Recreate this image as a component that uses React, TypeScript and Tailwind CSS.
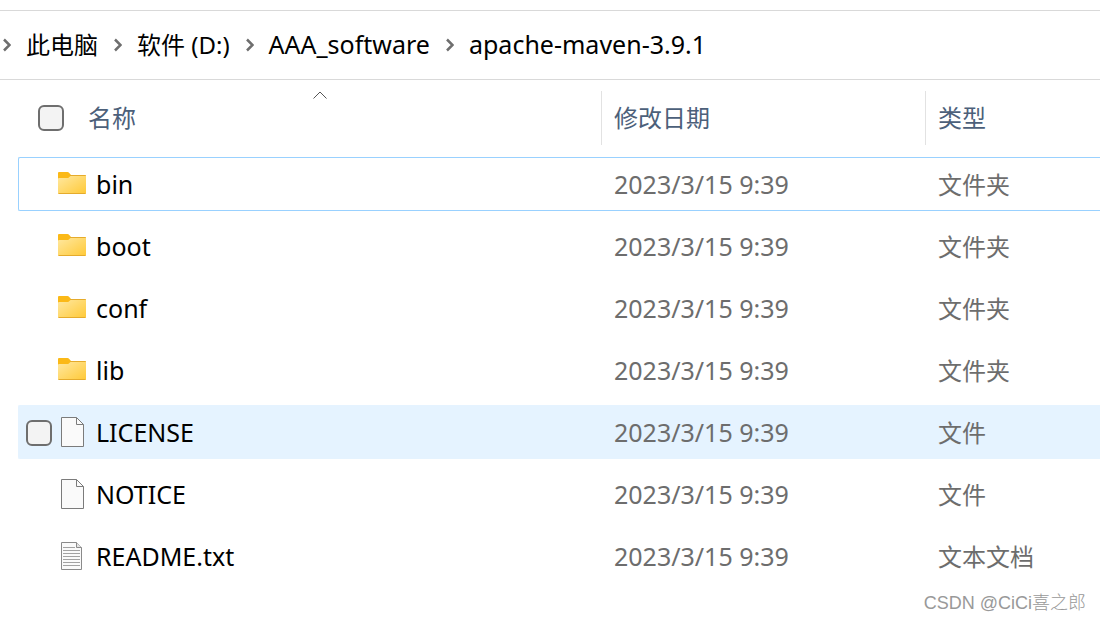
type EntryKind = "folder" | "file" | "text";

interface Entry {
  name: string;
  modified: string;
  type: string;
  kind: EntryKind;
  state?: "focused" | "hovered";
}

const PATH = [
  { label: "此电脑", size: "text-2xl" },
  { label: "软件 (D:)", size: "text-2xl" },
  { label: "AAA_software", size: "text-[25px]" },
  { label: "apache-maven-3.9.1", size: "text-[25px]" },
];

const ENTRIES: Entry[] = [
  { name: "bin", modified: "2023/3/15 9:39", type: "文件夹", kind: "folder", state: "focused" },
  { name: "boot", modified: "2023/3/15 9:39", type: "文件夹", kind: "folder" },
  { name: "conf", modified: "2023/3/15 9:39", type: "文件夹", kind: "folder" },
  { name: "lib", modified: "2023/3/15 9:39", type: "文件夹", kind: "folder" },
  { name: "LICENSE", modified: "2023/3/15 9:39", type: "文件", kind: "file", state: "hovered" },
  { name: "NOTICE", modified: "2023/3/15 9:39", type: "文件", kind: "file" },
  { name: "README.txt", modified: "2023/3/15 9:39", type: "文本文档", kind: "text" },
];

const CHECKBOX =
  "size-[26px] shrink-0 appearance-none rounded-md border-2 border-[#6e6e6e] bg-[#f3f3f3] checked:bg-[#0067c0]";

const FolderIcon = () => (
  <svg viewBox="0 0 32 32" className="size-8 shrink-0" aria-hidden="true">
    <defs>
      <linearGradient id="folder-front" x1="0" y1="0" x2="1" y2="1">
        <stop offset="0" stopColor="#ffe8a0" />
        <stop offset="1" stopColor="#ffc937" />
      </linearGradient>
    </defs>
    <path d="M2 5a1 1 0 0 1 1-1h8.500q.8 0 1.300.6L15 7h14a1 1 0 0 1 1 1v6H2z" fill="#fbb917" />
    <path d="M2 11a1 1 0 0 1 1-1h8.500q.8 0 1.300-.6L14.500 8H30v17a1 1 0 0 1-1 1H3a1 1 0 0 1-1-1z" fill="url(#folder-front)" />
    <path d="M14 7.500h15.500M2.500 25.500h27" stroke="#e5ab2c" fill="none" />
  </svg>
);

const FileIcon = () => (
  <svg viewBox="0 0 32 32" className="size-8 shrink-0" aria-hidden="true">
    <path d="M5.500 1.500h15l7 7v22h-22z" fill="#fafafa" stroke="#7b7b7b" />
    <path d="M20.500 1.500v7h7" fill="none" stroke="#7b7b7b" />
  </svg>
);

const TextIcon = () => (
  <svg viewBox="0 0 32 32" className="size-8 shrink-0" aria-hidden="true">
    <path d="M5.500 2.500h15l5 5v22h-20z" fill="#fafafa" stroke="#8a8a8a" />
    <path d="M20.500 2.500v5h5" fill="#e4e4e4" stroke="#8a8a8a" />
    <path
      d="M7 7.500h12M7 10.500h17M7 13.500h17M7 16.500h17M7 19.500h17M7 22.500h17M7 25.500h17"
      stroke="#a2a2a2"
    />
  </svg>
);

const ICONS = { folder: FolderIcon, file: FileIcon, text: TextIcon };

const Breadcrumb = () => (
  <nav aria-label="路径" className="border-y border-[#d9d9d9]">
    <ol className="flex h-[68px] items-center whitespace-nowrap pl-[3px] text-black">
      {PATH.map(({ label, size }) => (
        <li key={label} className="flex items-center">
          <svg viewBox="0 0 8 14" className="mr-[15px] h-[14px] w-2 shrink-0" aria-hidden="true">
            <path d="M1 1.500l5.500 5.500L1 12.500" fill="none" stroke="#6e6e6e" strokeWidth="2.500" />
          </svg>
          <a href="#" className={`mr-4 ${size}`}>
            {label}
          </a>
        </li>
      ))}
    </ol>
  </nav>
);

const EntryRow = ({ entry }: { entry: Entry }) => {
  const Icon = ICONS[entry.kind];
  const focused = entry.state === "focused";
  const hovered = entry.state === "hovered";
  const cell = focused
    ? "h-[54px] border-y border-[#99d1ff] p-0"
    : hovered
      ? "h-[54px] border-y border-[#e5f3ff] bg-[#e5f3ff] p-0"
      : "h-[54px] border-y border-transparent p-0";

  return (
    <tr>
      <td className={`${cell} rounded-l-xs border-l`}>
        <label className="flex items-center gap-2 pl-[7px] text-[25px] leading-8 text-black">
          <span className="flex items-end gap-1">
            <input
              type="checkbox"
              aria-label={entry.name}
              className={hovered ? `${CHECKBOX} mb-0.5` : `${CHECKBOX} mb-0.5 opacity-0`}
            />
            <Icon />
          </span>
          {entry.name}
        </label>
      </td>
      <td className={cell}>
        <div className="pl-[13px] text-[25px] leading-8">{entry.modified}</div>
      </td>
      <td className={cell}>
        <div className="pl-[13px] pt-0.5">{entry.type}</div>
      </td>
    </tr>
  );
};

export default function App() {
  return (
    <div className="min-h-screen overflow-hidden bg-white pt-[10px] font-['Noto_Sans','Noto_Sans_CJK_SC',sans-serif] text-2xl">
      <Breadcrumb />

      <main className="pl-[18px] pt-[3px]">
        <table className="w-full table-fixed border-separate border-spacing-x-0 border-spacing-y-2 whitespace-nowrap text-left text-[#6d6d6d]">
          <colgroup>
            <col className="w-[583px]" />
            <col className="w-[324px]" />
            <col />
          </colgroup>
          <thead className="text-[#4c607a]">
            <tr>
              <th className="p-0 pb-1 font-normal">
                <div className="relative ml-5 flex h-[54px] items-center gap-6">
                  <input type="checkbox" aria-label="全选" className={CHECKBOX} />
                  名称
                  {/* Sort direction */}
                  <svg
                    viewBox="0 0 14 8"
                    className="absolute left-1/2 top-0 h-2 w-[14px] -translate-x-1/2"
                    aria-hidden="true"
                  >
                    <path d="M.5 7.500L7 1l6.500 6.500" fill="none" stroke="#555" />
                  </svg>
                </div>
              </th>
              <th className="p-0 pb-1 font-normal">
                <div className="flex h-[54px] items-center border-l border-[#e2e2e2] pl-3">修改日期</div>
              </th>
              <th className="p-0 pb-1 font-normal">
                <div className="flex h-[54px] items-center border-l border-[#e2e2e2] pl-3">类型</div>
              </th>
            </tr>
          </thead>
          <tbody>
            {ENTRIES.map((entry) => (
              <EntryRow key={entry.name} entry={entry} />
            ))}
          </tbody>
        </table>
      </main>

      <footer className="pr-[14px] text-right font-['Liberation_Sans','Noto_Sans_CJK_SC',sans-serif] text-lg leading-6 font-light text-[#999]">
        CSDN @CiCi喜之郎
      </footer>
    </div>
  );
}
